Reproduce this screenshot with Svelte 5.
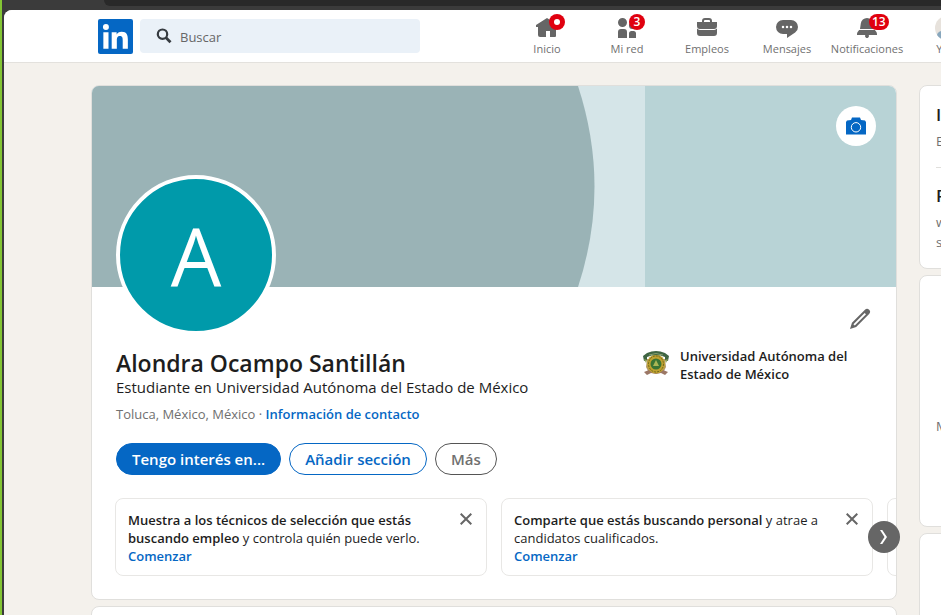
<script>
  const nav = [
    { id: 'home', label: 'Inicio', badge: 'dot' },
    { id: 'network', label: 'Mi red', badge: '3' },
    { id: 'jobs', label: 'Empleos', badge: '' },
    { id: 'messages', label: 'Mensajes', badge: '' },
    { id: 'bell', label: 'Notificaciones', badge: '13' },
  ];
  const cards = [
    { strong: 'Muestra a los técnicos de selección que estás buscando empleo', rest: ' y controla quién puede verlo.' },
    { strong: 'Comparte que estás buscando personal', rest: ' y atrae a candidatos cualificados.' },
  ];
</script>

<div class="screen">
  <div class="chrome"><div class="toolbar"></div></div>
  <div class="window">
    <header>
      <a class="logo" href="#home" aria-label="in">
        <svg viewBox="0 0 34 34" width="35" height="35">
          <rect width="34" height="34" rx="2" fill="#0567c4" />
          <g fill="#fff">
            <circle cx="7.700" cy="7.700" r="2.900" />
            <path d="M5.200 12.800h5v16.100h-5z" />
            <path d="M13.300 12.800h4.800V15c.7-1.300 2.400-2.600 4.900-2.600 5 0 6 3.300 6 7.600v8.900h-5v-8c0-1.900 0-4.300-2.600-4.300s-3.100 2-3.100 4.200v8.100h-5z" />
          </g>
        </svg>
      </a>
      <label class="search">
        <svg viewBox="0 0 16 16" width="16" height="16" fill="none" stroke="#363b40">
          <circle cx="6.500" cy="6.200" r="4.700" stroke-width="2.200" />
          <path d="M9.800 9.600l4.700 4.700" stroke-width="2.800" />
        </svg>
        <input type="text" placeholder="Buscar" aria-label="Buscar" />
      </label>
      <nav>
        {#each nav as item}
          <a href="#{item.id}">
            <span class="icon">
              <svg viewBox="0 0 24 24" width="24" height="24" fill="#666">
                {#if item.id === 'home'}
                  <path d="M23 9v2h-2v9a1 1 0 0 1-1 1h-5v-6h-4v6H5a2 2 0 0 1-2-2v-8H1V9l11-7z" />
                {:else if item.id === 'network'}
                  <path d="M12 16v6H3v-6a3 3 0 0 1 3-3h3a3 3 0 0 1 3 3zm5.500-3A3.500 3.500 0 1 0 14 9.500a3.500 3.500 0 0 0 3.500 3.500zm1 2h-2a2.500 2.500 0 0 0-2.500 2.500V22h7v-4.500a2.500 2.500 0 0 0-2.500-2.500zM7.500 2A4.500 4.500 0 1 0 12 6.500 4.490 4.490 0 0 0 7.500 2z" />
                {:else if item.id === 'jobs'}
                  <path d="M17 6V5a3 3 0 0 0-3-3h-4a3 3 0 0 0-3 3v1H2v4a3 3 0 0 0 3 3h14a3 3 0 0 0 3-3V6zM9 5a1 1 0 0 1 1-1h4a1 1 0 0 1 1 1v1H9zm10 9a4 4 0 0 0 3-1.380V17a3 3 0 0 1-3 3H5a3 3 0 0 1-3-3v-4.380A4 4 0 0 0 5 14z" />
                {:else if item.id === 'messages'}
                  <path d="M16 4H8a7 7 0 0 0 0 14h4v4l8.160-5.390A6.780 6.780 0 0 0 23 11a7 7 0 0 0-7-7zm-8 8.250A1.250 1.250 0 1 1 9.250 11 1.250 1.250 0 0 1 8 12.250zm4 0A1.250 1.250 0 1 1 13.250 11 1.250 1.250 0 0 1 12 12.250zm4 0A1.250 1.250 0 1 1 17.250 11 1.250 1.250 0 0 1 16 12.250z" />
                {:else}
                  <path d="M22 19h-8.280a2 2 0 1 1-3.440 0H2v-1a4.520 4.520 0 0 1 1.170-2.830l1-1.170h15.700l1 1.170A4.420 4.420 0 0 1 22 18zM18.210 7.440A6.270 6.270 0 0 0 12 2a6.270 6.270 0 0 0-6.210 5.440L5 13h14z" />
                {/if}
              </svg>
              {#if item.badge === 'dot'}
                <span class="badge"><i></i></span>
              {:else if item.badge}
                <span class="badge">{item.badge}</span>
              {/if}
            </span>
            <span>{item.label}</span>
          </a>
        {/each}
        <a class="me" href="#me">
          <span class="icon">
            <svg viewBox="0 0 24 24" width="24" height="24">
              <circle cx="12" cy="12" r="12" fill="#e7e2dc" />
              <path d="M2 19a10 5 0 0 1 20 0 12 12 0 0 1-20 0z" fill="#88a7bd" />
            </svg>
          </span>
          <span>Yo ▾</span>
        </a>
      </nav>
    </header>

    <div class="layout">
      <main>
        <section class="panel profile">
          <div class="cover">
            <svg class="art" viewBox="0 0 804 201" preserveAspectRatio="none" aria-hidden="true">
              <rect width="804" height="201" fill="#b8d3d6" />
              <rect width="553" height="201" fill="#d5e5e8" />
              <path d="M0 0h486Q519 101 486 201H0z" fill="#9ab3b6" />
            </svg>
            <button class="camera" aria-label="Cámara">
              <svg viewBox="0 0 20 18" width="20" height="18">
                <path d="M0 17.500V5l1-1.500L5 3 6 .5h8L15 3l4 .5L20 5v12.500z" fill="#0567c4" />
                <circle cx="10" cy="10.300" r="4.700" fill="none" stroke="#fff" stroke-width="1" />
              </svg>
            </button>
          </div>
          <div class="avatar">A</div>
          <div class="body">
            <button class="edit" aria-label="Editar">
              <svg viewBox="0 0 24 24" width="24" height="24" fill="#666">
                <path d="M21.130 2.860a3 3 0 0 0-4.170 0l-13 13L2 22l6.190-2L21.130 7a3 3 0 0 0 0-4.160zM6.770 18.570l-1.350-1.350L16.640 6 18 7.350z" />
              </svg>
            </button>
            <div class="intro">
              <div class="who">
                <h1>Alondra Ocampo Santillán</h1>
                <p class="headline">Estudiante en Universidad Autónoma del Estado de México</p>
                <p class="place">Toluca, México, México · <a href="#contact">Información de contacto</a></p>
              </div>
              <div class="school">
                <svg viewBox="0 0 28 26" width="28" height="26">
                  <path d="M5 9l-1 8 3 6h14l3-6-1-8z" fill="#b39a6a" />
                  <path d="M2 22l5-2 7 3 7-3 5 2-3 3-4-2-5 1-5-1-4 2z" fill="#9b7766" />
                  <ellipse cx="14" cy="14" rx="9" ry="9.500" fill="#c0a230" />
                  <ellipse cx="14" cy="14" rx="7.500" ry="8" fill="none" stroke="#70681c" stroke-dasharray="2 1" />
                  <circle cx="14" cy="14" r="5.500" fill="#3a7434" />
                  <path d="M14 10l3 6h-6z" fill="#aab655" />
                  <path d="M5 3q9-4 18 0l4 3-1 5-3-1V7q-9-4-18 0v3l-3 1-1-5z" fill="#3f6543" />
                  <path d="M7 5q7-3 14 0" fill="none" stroke="#86a070" />
                  <path d="M2 9l3 1-1 3zM26 9l-3 1 1 3z" fill="#91a456" />
                </svg>
                <span>Universidad Autónoma del Estado de México</span>
              </div>
            </div>
            <div class="actions">
              <button class="primary">Tengo interés en...</button>
              <button class="outline">Añadir sección</button>
              <button class="muted">Más</button>
            </div>
            <div class="carousel">
              <div class="track">
                {#each cards as card}
                  <article>
                    <p><strong>{card.strong}</strong>{card.rest}<br /><a href="#start">Comenzar</a></p>
                    <button aria-label="Cerrar">
                      <svg viewBox="0 0 12 12" width="12" height="12"><path d="M.7.7l10.600 10.600M11.300.7L.7 11.300" stroke="#666" stroke-width="2" /></svg>
                    </button>
                  </article>
                {/each}
                <article></article>
              </div>
              <button class="next" aria-label="Siguiente">
                <svg viewBox="0 0 8 14" width="8" height="14"><path d="M0 0h2.300L7 7l-4.700 7H0l4.500-7z" fill="#fff" /></svg>
              </button>
            </div>
          </div>
        </section>
        <section class="panel following"></section>
      </main>

      <aside>
        <section class="panel settings">
          <h2>I</h2>
          <p>E</p>
          <hr />
          <h2>P</h2>
          <p>w<br />s</p>
        </section>
        <section class="panel promo"><p>M</p></section>
        <section class="panel rest"></section>
      </aside>
    </div>
  </div>
</div>

<style>
  :global(body) { margin: 0; }
  .screen, .screen * { box-sizing: border-box; }
  .screen {
    height: 100vh;
    overflow: hidden;
    display: flex;
    flex-direction: column;
    background: #3b3b3b;
    border-left: 2px solid #83c534;
    font-family: "Open Sans", "Noto Sans", sans-serif;
    color: #1d1d1d;
  }
  h1, h2, p { margin: 0; }
  a { text-decoration: none; color: #0567c4; }
  button { font: inherit; padding: 0; border: 0; background: none; cursor: pointer; }
  svg { display: block; flex: none; }
  .chrome { height: 10px; flex: none; padding-left: 102px; }
  .toolbar { height: 6px; background: #292929; border-bottom-left-radius: 8px; }
  .window {
    flex: 1;
    min-height: 0;
    margin-left: 2px;
    overflow: hidden;
    background: #f4f1ec;
    border-top-left-radius: 8px;
  }
  header {
    height: 53px;
    display: flex;
    align-items: center;
    padding-left: 94px;
    background: #fff;
    border-bottom: 1px solid #e3e1dd;
  }
  .search {
    width: 280px;
    height: 34px;
    flex: none;
    display: flex;
    align-items: center;
    gap: 8px;
    margin-left: 7px;
    padding: 0 16px;
    border-radius: 4px;
    background: #eaf1f8;
  }
  .search input {
    min-width: 0;
    flex: 1;
    padding: 2px 0 0;
    border: 0;
    outline: 0;
    background: none;
    font: 13px/20px "Open Sans", sans-serif;
  }
  .search input::placeholder { color: #666; opacity: 1; }
  nav { display: flex; flex: none; margin-left: 87px; }
  nav a {
    width: 80px;
    display: flex;
    flex-direction: column;
    align-items: center;
    color: #707070;
    font-size: 11px;
    line-height: 16px;
    white-space: nowrap;
  }
  .icon { position: relative; height: 25px; }
  .badge {
    position: absolute;
    left: 14px;
    top: -2px;
    min-width: 16px;
    height: 16px;
    padding: 0 3px;
    display: flex;
    align-items: center;
    justify-content: center;
    border-radius: 8px;
    background: #e0000f;
    color: #fff;
    font-size: 12px;
    font-weight: 600;
  }
  .badge i { width: 6px; height: 6px; flex: none; border-radius: 50%; background: #fff; }
  .layout {
    display: flex;
    align-items: flex-start;
    gap: 22px;
    padding: 22px 0 0 87px;
  }
  main { width: 806px; flex: none; }
  .panel { background: #fff; border: 1px solid #e0dfdc; border-radius: 8px; }
  .profile { position: relative; }
  .cover { position: relative; height: 201px; overflow: hidden; border-radius: 7px 7px 0 0; }
  .art { width: 100%; height: 100%; }
  .camera {
    position: absolute;
    top: 20px;
    right: 20px;
    width: 40px;
    height: 40px;
    display: grid;
    place-items: center;
    border-radius: 50%;
    background: #fff;
  }
  .avatar {
    position: absolute;
    left: 24px;
    top: 89px;
    width: 160px;
    height: 160px;
    display: grid;
    place-items: center;
    border: 4px solid #fff;
    border-radius: 50%;
    background: #009aaa;
    color: #fff;
    font-size: 80px;
    font-weight: 500;
    line-height: 152px;
  }
  .body { display: flex; flex-direction: column; padding: 20px 0 23px 24px; }
  .edit { align-self: flex-end; margin-right: 24px; }
  .intro { display: flex; justify-content: space-between; padding-right: 32px; margin-top: 14px; }
  .who { padding-top: 4px; }
  h1 { font-size: 23px; line-height: 28px; font-weight: 600; }
  .headline { font-size: 15px; line-height: 20px; }
  .place { margin-top: 7px; color: #707070; font-size: 13px; line-height: 20px; }
  .place a { font-weight: 600; }
  .school {
    width: 222px;
    display: flex;
    align-items: flex-start;
    gap: 10px;
    padding-top: 2px;
    font-size: 13px;
    line-height: 18px;
    font-weight: 600;
  }
  .school svg { margin-top: 3px; }
  .actions { display: flex; gap: 8px; margin-top: 19px; }
  .actions button {
    height: 32px;
    padding: 0 15px;
    border: 1px solid #0567c4;
    border-radius: 16px;
    font-size: 15px;
    font-weight: 600;
    color: #0567c4;
  }
  .actions .primary { background: #0567c4; color: #fff; }
  .actions .muted { border-color: #555; color: #707070; }
  .carousel { position: relative; margin-top: 23px; }
  .track { display: flex; gap: 14px; overflow: hidden; margin-left: -1px; }
  article {
    width: 372px;
    height: 78px;
    flex: none;
    display: flex;
    justify-content: space-between;
    align-items: flex-start;
    padding: 12px 14px 12px 12px;
    border: 1px solid #e8e7e5;
    border-radius: 8px;
    font-size: 13px;
    line-height: 18px;
  }
  article p { width: 316px; }
  article strong, article a { font-weight: 600; }
  article button { margin-top: 2px; }
  .next {
    position: absolute;
    right: -4px;
    top: 23px;
    width: 32px;
    height: 32px;
    display: grid;
    place-items: center;
    border-radius: 50%;
    background: #666;
  }
  .following { height: 80px; margin-top: 6px; }
  aside { flex: none; width: 300px; display: flex; flex-direction: column; gap: 6px; }
  .settings { padding: 18px 16px 16px; }
  h2 { font-size: 17px; line-height: 22px; font-weight: 600; }
  .settings p { color: #707070; font-size: 13px; line-height: 20px; margin-top: 5px; }
  hr { margin: 16px 0 17px; border: 0; border-top: 1px solid #e0dfdc; }
  .promo { height: 252px; padding: 140px 16px 0; color: #707070; font-size: 13px; line-height: 20px; }
  .rest { height: 200px; }
</style>
